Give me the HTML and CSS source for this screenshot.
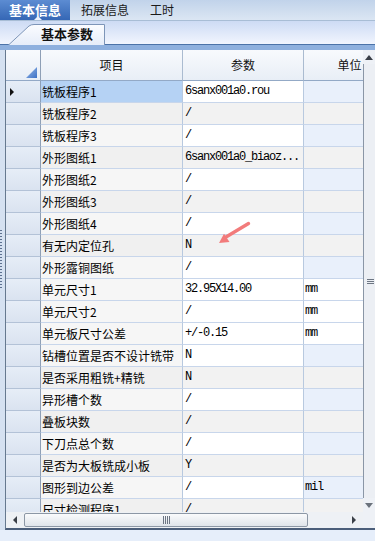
FILE: index.html
```html
<!DOCTYPE html>
<html lang="zh-CN">
<head>
    <meta charset="UTF-8">
    <meta name="viewport" content="width=device-width, initial-scale=1.0">
    <title>基本信息</title>
    <link rel="stylesheet" href="styles.css">
</head>
<body>
    <div class="tabs">
        <div class="tab active">基本信息</div>
        <div class="tab">拓展信息</div>
        <div class="tab">工时</div>
    </div>

    <div class="subbar">
        <div class="subtab">
            <svg class="subtab-shape" viewBox="0 0 97 21" preserveAspectRatio="none">
                <defs>
                    <linearGradient id="tabfill" x1="0" y1="0" x2="0" y2="1">
                        <stop offset="0" stop-color="#fbfcff"/>
                        <stop offset="1" stop-color="#e6edf9"/>
                    </linearGradient>
                </defs>
                <path d="M0.5 21 L21 2 Q23 0.5 26 0.5 L96.5 0.5 L96.5 21" fill="url(#tabfill)" stroke="#7d95b8"/>
            </svg>
            <span class="subtab-label">基本参数</span>
        </div>
    </div>
    <div class="band"></div>

    <div class="frame">
        <div class="side"><div class="grip"></div></div>
        <div class="grid">
            <div class="grid-main">
                <div class="cells">
                    <div class="row head">
                        <div class="rh corner"></div>
                        <div class="hc">项目</div>
                        <div class="hc">参数</div>
                        <div class="hc">单位</div>
                    </div>
                    <div class="row">
                        <div class="rh"><span class="current"></span></div>
                        <div class="c name selected">铣板程序1</div>
                        <div class="c val">6sanx001a0.rou</div>
                        <div class="c unit"></div>
                    </div>
                    <div class="row alt">
                        <div class="rh"></div>
                        <div class="c name">铣板程序2</div>
                        <div class="c val">/</div>
                        <div class="c unit"></div>
                    </div>
                    <div class="row">
                        <div class="rh"></div>
                        <div class="c name">铣板程序3</div>
                        <div class="c val">/</div>
                        <div class="c unit"></div>
                    </div>
                    <div class="row alt">
                        <div class="rh"></div>
                        <div class="c name">外形图纸1</div>
                        <div class="c val">6sanx001a0_biaoz...</div>
                        <div class="c unit"></div>
                    </div>
                    <div class="row">
                        <div class="rh"></div>
                        <div class="c name">外形图纸2</div>
                        <div class="c val">/</div>
                        <div class="c unit"></div>
                    </div>
                    <div class="row alt">
                        <div class="rh"></div>
                        <div class="c name">外形图纸3</div>
                        <div class="c val">/</div>
                        <div class="c unit"></div>
                    </div>
                    <div class="row">
                        <div class="rh"></div>
                        <div class="c name">外形图纸4</div>
                        <div class="c val">/</div>
                        <div class="c unit"></div>
                    </div>
                    <div class="row alt">
                        <div class="rh"></div>
                        <div class="c name">有无内定位孔</div>
                        <div class="c val">N</div>
                        <div class="c unit"></div>
                    </div>
                    <div class="row">
                        <div class="rh"></div>
                        <div class="c name">外形露铜图纸</div>
                        <div class="c val">/</div>
                        <div class="c unit"></div>
                    </div>
                    <div class="row filled">
                        <div class="rh"></div>
                        <div class="c name">单元尺寸1</div>
                        <div class="c val">32.95X14.00</div>
                        <div class="c unit">mm</div>
                    </div>
                    <div class="row filled">
                        <div class="rh"></div>
                        <div class="c name">单元尺寸2</div>
                        <div class="c val">/</div>
                        <div class="c unit">mm</div>
                    </div>
                    <div class="row filled">
                        <div class="rh"></div>
                        <div class="c name">单元板尺寸公差</div>
                        <div class="c val">+/-0.15</div>
                        <div class="c unit">mm</div>
                    </div>
                    <div class="row">
                        <div class="rh"></div>
                        <div class="c name">钻槽位置是否不设计铣带</div>
                        <div class="c val">N</div>
                        <div class="c unit"></div>
                    </div>
                    <div class="row alt">
                        <div class="rh"></div>
                        <div class="c name">是否采用粗铣+精铣</div>
                        <div class="c val">N</div>
                        <div class="c unit"></div>
                    </div>
                    <div class="row">
                        <div class="rh"></div>
                        <div class="c name">异形槽个数</div>
                        <div class="c val">/</div>
                        <div class="c unit"></div>
                    </div>
                    <div class="row alt">
                        <div class="rh"></div>
                        <div class="c name">叠板块数</div>
                        <div class="c val">/</div>
                        <div class="c unit"></div>
                    </div>
                    <div class="row">
                        <div class="rh"></div>
                        <div class="c name">下刀点总个数</div>
                        <div class="c val">/</div>
                        <div class="c unit"></div>
                    </div>
                    <div class="row alt">
                        <div class="rh"></div>
                        <div class="c name">是否为大板铣成小板</div>
                        <div class="c val">Y</div>
                        <div class="c unit"></div>
                    </div>
                    <div class="row">
                        <div class="rh"></div>
                        <div class="c name">图形到边公差</div>
                        <div class="c val">/</div>
                        <div class="c unit">mil</div>
                    </div>
                    <div class="row alt">
                        <div class="rh"></div>
                        <div class="c name">尺寸检测程序1</div>
                        <div class="c val">/</div>
                        <div class="c unit"></div>
                    </div>
                </div>

                <div class="vscroll">
                    <div class="arrow-btn"><span class="tri up"></span></div>
                    <div class="vthumb"><span class="lines"></span></div>
                    <div class="arrow-btn"><span class="tri down"></span></div>
                </div>
            </div>

            <div class="hscroll-row">
                <div class="hscroll">
                    <div class="arrow-btn h"><span class="tri left"></span></div>
                    <div class="hthumb"><span class="bars"></span></div>
                    <div class="arrow-btn h"><span class="tri right"></span></div>
                </div>
                <div class="scroll-corner"></div>
            </div>
        </div>
    </div>

    <!-- pink annotation arrow drawn over the grid -->
    <svg class="mark" viewBox="0 0 40 28">
        <path d="M34.5 3.5 L12 17" stroke="#f27b7b" stroke-width="3.4" stroke-linecap="round"/>
        <polygon points="5,23 15.5,22 10,13.8" fill="#f27b7b"/>
    </svg>
</body>
</html>
```

FILE: styles.css
```css
/* General */
body {
    margin: 0;
    width: 375px;
    height: 541px;
    overflow: hidden;
    position: relative;
    background-color: #e6eefa;
    font-family: "Noto Sans CJK SC", "Liberation Sans", sans-serif;
    font-size: 12px;
    color: #000;
}

/* Top tabs */
.tabs {
    display: flex;
    height: 20px;
    background: linear-gradient(#c1d3ea, #dbe6f3);
    border-bottom: 1px solid #a8bdd5;
}
.tab {
    padding: 0 10px 0 11px;
    line-height: 20px;
    color: #1a1a1a;
}
.tab.active {
    position: relative;
    width: 70px;
    box-sizing: border-box;
    padding: 0 0 0 9px;
    font-size: 13px;
    font-weight: bold;
    color: #fff;
    background: linear-gradient(#5c8cd2, #3567b5);
}
.tab.active::after {
    content: "";
    position: absolute;
    left: 34px;
    bottom: 0;
    border-left: 4px solid transparent;
    border-right: 4px solid transparent;
    border-bottom: 4px solid #e9f0fb;
}

/* Sub tab strip */
.subbar {
    display: flex;
    align-items: flex-end;
    height: 23px;
    background: linear-gradient(#cddbf4, #f1f5fe);
    border-bottom: 1px solid #4c73a8;
}
.subtab {
    position: relative;
    width: 97px;
    height: 20px;
    margin-left: 8px;
}
.subtab-shape {
    position: absolute;
    left: 0;
    top: 0;
    width: 97px;
    height: 21px;
}
.subtab-label {
    position: relative;
    display: block;
    padding-left: 33px;
    line-height: 20px;
    font-size: 13px;
    font-weight: bold;
    color: #111;
}
.band {
    height: 5px;
    background-color: #8eb0de;
}

/* Grid frame */
.frame {
    display: flex;
    height: 480px;
}
.side {
    width: 5px;
    background-color: #d5e1f1;
}
.grip {
    width: 2px;
    height: 58px;
    margin-top: 180px;
    background: repeating-linear-gradient(#5d7190 0 1px, transparent 1px 3px);
}
.grid {
    flex: 1;
    min-width: 0;
    display: flex;
    flex-direction: column;
    border-left: 1px solid #66798f;
    border-bottom: 2px solid #4b5e7a;
}
.grid-main {
    display: flex;
    height: 462px;
}
.cells {
    flex: 1;
    min-width: 0;
    overflow: hidden;
    background-color: #f4f4f4;
}

/* Rows */
.row {
    display: grid;
    grid-template-columns: 35px 142px 121px 92px;
    height: 22px;
}
.row.head {
    height: 31px;
}
.row > div {
    box-sizing: border-box;
    white-space: nowrap;
    overflow: hidden;
}
.rh {
    display: flex;
    align-items: center;
    background: linear-gradient(#e6edf7, #dae3f0);
    border-right: 1px solid #8e9fb6;
    border-bottom: 1px solid #b3c2d7;
}
.hc {
    line-height: 30px;
    text-align: center;
    background: linear-gradient(#f8fafd, #e8eef6);
    border-right: 1px solid #aabbd0;
    border-bottom: 1px solid #93a9c6;
    color: #111;
}
.corner {
    position: relative;
    background: linear-gradient(#f8fafd, #e8eef6);
    border-bottom: 1px solid #93a9c6;
}
.corner::after {
    content: "";
    position: absolute;
    right: 3px;
    bottom: 2px;
    width: 11px;
    height: 11px;
    background: linear-gradient(135deg, #9dbbe8, #3b71c6);
    clip-path: polygon(100% 0, 100% 100%, 0 100%);
}
.current {
    margin-left: 4px;
    border-top: 4px solid transparent;
    border-bottom: 4px solid transparent;
    border-left: 4px solid #111;
}

/* Cells */
.c {
    padding-left: 1px;
    line-height: 21px;
    border-right: 1px solid #b8c9df;
    border-bottom: 1px solid #c8d6eb;
}
.name {
    background-color: #f6f6f6;
}
.alt .name {
    background-color: #f0f0f0;
}
.name.selected {
    background-color: #b5d2f4;
}
.val,
.unit {
    font-family: "Liberation Mono", "DejaVu Sans Mono", monospace;
    font-size: 12px;
    letter-spacing: -1.2px;
    background-color: #fff;
}
.val {
    padding-left: 2px;
}
.unit {
    background-color: #e9f0fb;
}
.alt .val,
.alt .unit {
    background-color: #f2f2f2;
}
.filled .val,
.filled .unit {
    background-color: #fff;
}

/* Scrollbars */
.vscroll {
    width: 12px;
    display: flex;
    flex-direction: column;
    background-color: #eef1f6;
}
.vscroll .arrow-btn {
    height: 14px;
    display: flex;
    align-items: center;
    justify-content: center;
}
.vthumb {
    flex: 1;
    display: flex;
    align-items: center;
    justify-content: center;
    border-left: 1px solid #8a96a6;
    background-color: #eceff4;
}
.lines {
    width: 7px;
    height: 5px;
    margin-left: 1px;
    background: repeating-linear-gradient(#6d7683 0 1px, transparent 1px 2px);
}
.hscroll-row {
    display: flex;
    height: 16px;
}
.hscroll {
    flex: 1;
    display: flex;
    align-items: center;
    background-color: #eef1f5;
}
.arrow-btn.h {
    width: 18px;
    height: 16px;
    display: flex;
    align-items: center;
    justify-content: center;
}
.hthumb {
    flex: 1;
    height: 12px;
    margin-right: 37px;
    display: flex;
    align-items: center;
    justify-content: center;
    border: 1px solid #8c97a5;
    border-radius: 2px;
    background: linear-gradient(#fafbfc, #dfe4ea);
}
.bars {
    width: 7px;
    height: 8px;
    background: repeating-linear-gradient(90deg, #6c7583 0 1px, transparent 1px 2px);
}
.scroll-corner {
    width: 12px;
    background-color: #eef1f6;
}
.tri {
    width: 0;
    height: 0;
}
.tri.up {
    border-left: 4px solid transparent;
    border-right: 4px solid transparent;
    border-bottom: 5px solid #3a3f47;
}
.tri.down {
    border-left: 4px solid transparent;
    border-right: 4px solid transparent;
    border-top: 5px solid #6b727c;
}
.tri.left {
    border-top: 4px solid transparent;
    border-bottom: 4px solid transparent;
    border-right: 4px solid #3a3f47;
}
.tri.right {
    border-top: 4px solid transparent;
    border-bottom: 4px solid transparent;
    border-left: 4px solid #3a3f47;
}

/* Annotation arrow */
.mark {
    position: absolute;
    left: 214px;
    top: 220px;
    width: 40px;
    height: 28px;
}
```
